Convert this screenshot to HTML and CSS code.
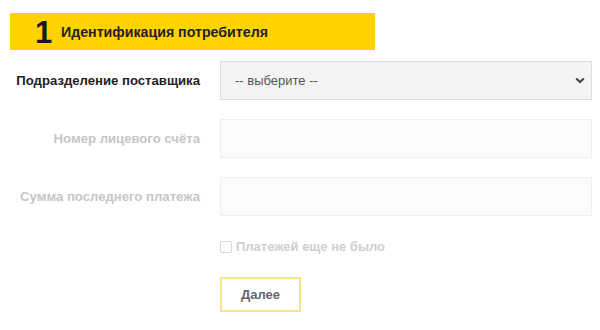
FILE: index.html
```html
<!DOCTYPE html>
<html lang="ru">
<head>
<meta charset="utf-8">
<link rel="stylesheet" href="styles.css">
</head>
<body>
<div class="page">
  <div class="step">
    <span class="step-num">1</span>
    <span class="step-title">Идентификация потребителя</span>
  </div>
  <div class="form">
    <div class="row">
      <label class="label">Подразделение поставщика</label>
      <div class="select">
        <span>-- выберите --</span>
        <svg class="chev" width="10" height="7" viewBox="0 0 10 7"><path d="M1.2 1.4 L5 5 L8.8 1.4" fill="none" stroke="#444" stroke-width="2"/></svg>
      </div>
    </div>
    <div class="row">
      <label class="label muted">Номер лицевого счёта</label>
      <div class="input"></div>
    </div>
    <div class="row">
      <label class="label muted">Сумма последнего платежа</label>
      <div class="input"></div>
    </div>
    <div class="row check-row">
      <span></span>
      <label class="check"><span class="box"></span>Платежей еще не было</label>
    </div>
    <div class="row btn-row">
      <span></span>
      <div><button class="btn">Далее</button></div>
    </div>
  </div>
</div>
</body>
</html>
```
FILE: styles.css
```css
html, body { margin: 0; padding: 0; background: #fff; }
body { font-family: "Liberation Sans", Arial, sans-serif; font-size: 13px; color: #222; }
.page { padding: 13px 0 0 10px; }
.step {
  width: 365px; height: 37px; background: #ffd200;
  display: flex; align-items: center; box-sizing: border-box; padding-left: 25px;
}
.step-num { font-size: 31px; font-weight: bold; color: #1a1a1a; width: 26px; line-height: 1; margin-top: 1px; }
.step-title { font-weight: bold; font-size: 14.2px; color: #222; }
.form { margin-top: 11px; display: flex; flex-direction: column; gap: 19px; }
.row { display: grid; grid-template-columns: 190px 372px; column-gap: 20px; align-items: center; }
.label { text-align: right; font-weight: bold; color: #222; font-size: 13.15px; }
.label.muted { color: #c6c6c6; }
.select {
  height: 39px; box-sizing: border-box; border: 1px solid #dcdcdc; background: #f4f4f4;
  display: flex; align-items: center; justify-content: space-between; padding: 0 6px 0 14px;
  color: #555; font-size: 13px;
}
.input { height: 39px; box-sizing: border-box; border: 1px solid #efefef; background: #fbfbfb; }
.check-row { margin-top: 4px; }
.check { display: flex; align-items: center; font-weight: bold; color: #cfcfcf; gap: 4px; }
.box { width: 10px; height: 10px; border: 1px solid #d6d6d6; border-radius: 2px; background: #fff; }
.btn-row { margin-top: 4px; }
.btn {
  width: 81px; height: 35px; border: 2px solid #f7e48c; background: #fff;
  font-family: "Liberation Sans", Arial, sans-serif; font-weight: bold; font-size: 13px; color: #666;
  padding: 0;
}
```
